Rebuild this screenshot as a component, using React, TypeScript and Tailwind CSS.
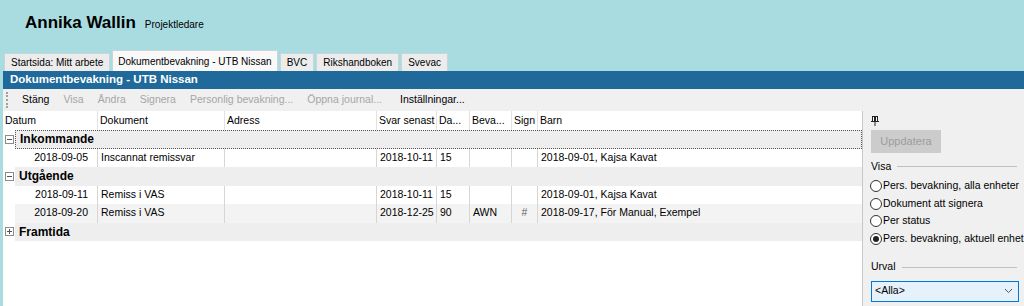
import React from "react";

const font = { fontFamily: '"Liberation Sans", Arial, sans-serif' };

function Tab({ label, active }: { label: string; active?: boolean }) {
  return (
    <div
      className={
        active
          ? "h-[21px] px-[5px] flex items-center bg-[#f9f9f9] border border-b-0 border-[#c9d6d8] text-[10px] text-black whitespace-nowrap"
          : "h-[18px] px-[6px] flex items-center bg-[#ececec] border border-b-0 border-[#c9d6d8] text-[10px] text-black whitespace-nowrap"
      }
    >
      {label}
    </div>
  );
}

function Expander({ plus }: { plus?: boolean }) {
  return (
    <div className="w-[12px] flex items-center justify-center">
      <div className="w-[9px] h-[9px] border border-[#8c8c8c] bg-white relative">
        <div className="absolute left-[1px] right-[1px] top-[3px] h-px bg-[#555]" />
        {plus && <div className="absolute top-[1px] bottom-[1px] left-[3px] w-px bg-[#555]" />}
      </div>
    </div>
  );
}

function GroupRow({ label, plus, focus }: { label: string; plus?: boolean; focus?: boolean }) {
  return (
    <div className="h-[18.5px] flex bg-white">
      <Expander plus={plus} />
      <div
        className={
          "flex-1 flex items-center bg-[#eeeeee] pl-[4px] text-[12px] font-bold text-black " +
          (focus ? "border border-dotted border-[#555]" : "")
        }
      >
        {label}
      </div>
    </div>
  );
}

type Row = { d: string; doc: string; svar: string; da: string; beva: string; sign: string; barn: string; alt?: boolean };

function DataRow({ r }: { r: Row }) {
  const cell = "h-full flex items-center border-r border-[#d6d6d6] px-[3px] shrink-0 whitespace-nowrap overflow-hidden";
  return (
    <div className="h-[18.5px] flex bg-white text-[10.5px] text-black">
      <div className="w-[12px]" />
      <div className={"flex-1 flex " + (r.alt ? "bg-[#f3f3f3]" : "bg-white")}>
        <div className={cell + " w-[83px] justify-end pr-[9px]"}>{r.d}</div>
        <div className={cell + " w-[127px]"}>{r.doc}</div>
        <div className={cell + " w-[152px]"}></div>
        <div className={cell + " w-[60px]"}>{r.svar}</div>
        <div className={cell + " w-[33px]"}>{r.da}</div>
        <div className={cell + " w-[42px]"}>{r.beva}</div>
        <div className={cell + " w-[26px] justify-center text-[#666]"}>{r.sign}</div>
        <div className="h-full flex items-center px-[3px] flex-1 whitespace-nowrap">{r.barn}</div>
      </div>
    </div>
  );
}

function Radio({ label, checked }: { label: string; checked?: boolean }) {
  return (
    <div className="h-[17.7px] flex items-center gap-[1px] text-[10.5px] text-black whitespace-nowrap">
      <div className="w-[12px] h-[12px] rounded-full border border-[#333] bg-white flex items-center justify-center shrink-0">
        {checked && <div className="w-[6px] h-[6px] rounded-full bg-[#222]" />}
      </div>
      <span>{label}</span>
    </div>
  );
}

export default function App() {
  const hcell = "h-full flex items-center border-r border-[#e2e2e2] px-[2px] shrink-0 whitespace-nowrap overflow-hidden";
  return (
    <div className="w-[1024px] h-[306px] overflow-hidden bg-[#a9dce1] flex flex-col" style={font}>
      {/* Header */}
      <div className="h-[50px] pl-[25px] pt-[12px] flex items-start gap-[9px]">
        <span className="text-[17px] font-bold text-black leading-[22px]">Annika Wallin</span>
        <span className="text-[10px] text-black leading-[22px] pt-[2px]">Projektledare</span>
      </div>
      {/* Tabs */}
      <div className="h-[21px] pl-[4px] flex items-end gap-[2px]">
        <Tab label="Startsida: Mitt arbete" />
        <Tab label="Dokumentbevakning - UTB Nissan" active />
        <Tab label="BVC" />
        <Tab label="Rikshandboken" />
        <Tab label="Svevac" />
      </div>
      {/* Main */}
      <div className="flex-1 ml-[3px] flex flex-col min-h-0">
        <div className="h-[18px] bg-[#1f6a9b] flex items-center pl-[7px] text-[11.5px] font-bold text-white">
          Dokumentbevakning - UTB Nissan
        </div>
        <div className="h-[22px] bg-[#f0f0f0] flex items-center text-[10.5px]">
          <div className="ml-[3px] w-[2px] h-[16px] border-l-2 border-dotted border-[#a0a0a0]" />
          <div className="ml-[14px] flex items-center gap-[14px] whitespace-nowrap">
            <span className="text-black">Stäng</span>
            <span className="text-[#a6a6a6]">Visa</span>
            <span className="text-[#a6a6a6]">Ändra</span>
            <span className="text-[#a6a6a6]">Signera</span>
            <span className="text-[#a6a6a6]">Personlig bevakning...</span>
            <span className="text-[#a6a6a6]">Öppna journal...</span>
            <span className="text-black ml-[4px]">Inställningar...</span>
          </div>
        </div>
        <div className="flex-1 flex min-h-0">
          {/* Grid */}
          <div className="flex-1 bg-white flex flex-col">
            <div className="h-[19px] flex text-[10.5px] text-black">
              <div className={hcell + " w-[95px]"}>Datum</div>
              <div className={hcell + " w-[127px]"}>Dokument</div>
              <div className={hcell + " w-[152px]"}>Adress</div>
              <div className={hcell + " w-[60px]"}>Svar senast</div>
              <div className={hcell + " w-[33px]"}>Da...</div>
              <div className={hcell + " w-[42px]"}>Beva...</div>
              <div className={hcell + " w-[26px]"}>Sign</div>
              <div className="h-full flex items-center px-[2px] flex-1">Barn</div>
            </div>
            <GroupRow label="Inkommande" focus />
            <DataRow r={{ d: "2018-09-05", doc: "Inscannat remissvar", svar: "2018-10-11", da: "15", beva: "", sign: "", barn: "2018-09-01, Kajsa Kavat" }} />
            <GroupRow label="Utgående" />
            <DataRow r={{ d: "2018-09-11", doc: "Remiss i VAS", svar: "2018-10-11", da: "15", beva: "", sign: "", barn: "2018-09-01, Kajsa Kavat" }} />
            <DataRow r={{ d: "2018-09-20", doc: "Remiss i VAS", svar: "2018-12-25", da: "90", beva: "AWN", sign: "#", barn: "2018-09-17, För Manual, Exempel", alt: true }} />
            <GroupRow label="Framtida" plus />
          </div>
          {/* Right panel */}
          <div className="w-[162px] shrink-0 bg-[#f0f0f0] border-l border-[#c8c8c8] pl-[8px] pr-[6px] flex flex-col overflow-hidden">
            <div className="h-[19px] flex items-center">
              <svg width="8" height="10" viewBox="0 0 8 10">
                <rect x="1.5" y="0.5" width="5" height="5" fill="#fff" stroke="#222" />
                <rect x="3" y="1" width="2" height="4" fill="#222" />
                <rect x="0" y="5" width="8" height="1" fill="#222" />
                <rect x="3.5" y="6" width="1" height="4" fill="#222" />
              </svg>
            </div>
            <div className="w-[70px] h-[23px] bg-[#cccccc] flex items-center justify-center text-[11px] text-[#9c9c9c]">
              Uppdatera
            </div>
            <div className="h-[17px] mt-[5px] flex items-center gap-[6px] text-[10.5px] text-black">
              <span>Visa</span>
              <div className="flex-1 h-px bg-[#c0c0c0] mr-[1px]" />
            </div>
            <div className="mt-[2px] -ml-[1px]">
              <Radio label="Pers. bevakning, alla enheter" />
              <Radio label="Dokument att signera" />
              <Radio label="Per status" />
              <Radio label="Pers. bevakning, aktuell enhet" checked />
            </div>
            <div className="h-[17px] mt-[11px] flex items-center gap-[6px] text-[10.5px] text-black">
              <span>Urval</span>
              <div className="flex-1 h-px bg-[#c0c0c0] mr-[1px]" />
            </div>
            <div className="mt-[5px] h-[21px] w-[148px] border border-[#0078d7] bg-[#e5f1fb] flex items-center justify-between pl-[3px] pr-[5px] text-[10.5px] text-black">
              <span>&lt;Alla&gt;</span>
              <svg width="9" height="6" viewBox="0 0 9 6">
                <path d="M1 1 L4.5 4.5 L8 1" fill="none" stroke="#555" strokeWidth="1" />
              </svg>
            </div>
          </div>
        </div>
      </div>
    </div>
  );
}
